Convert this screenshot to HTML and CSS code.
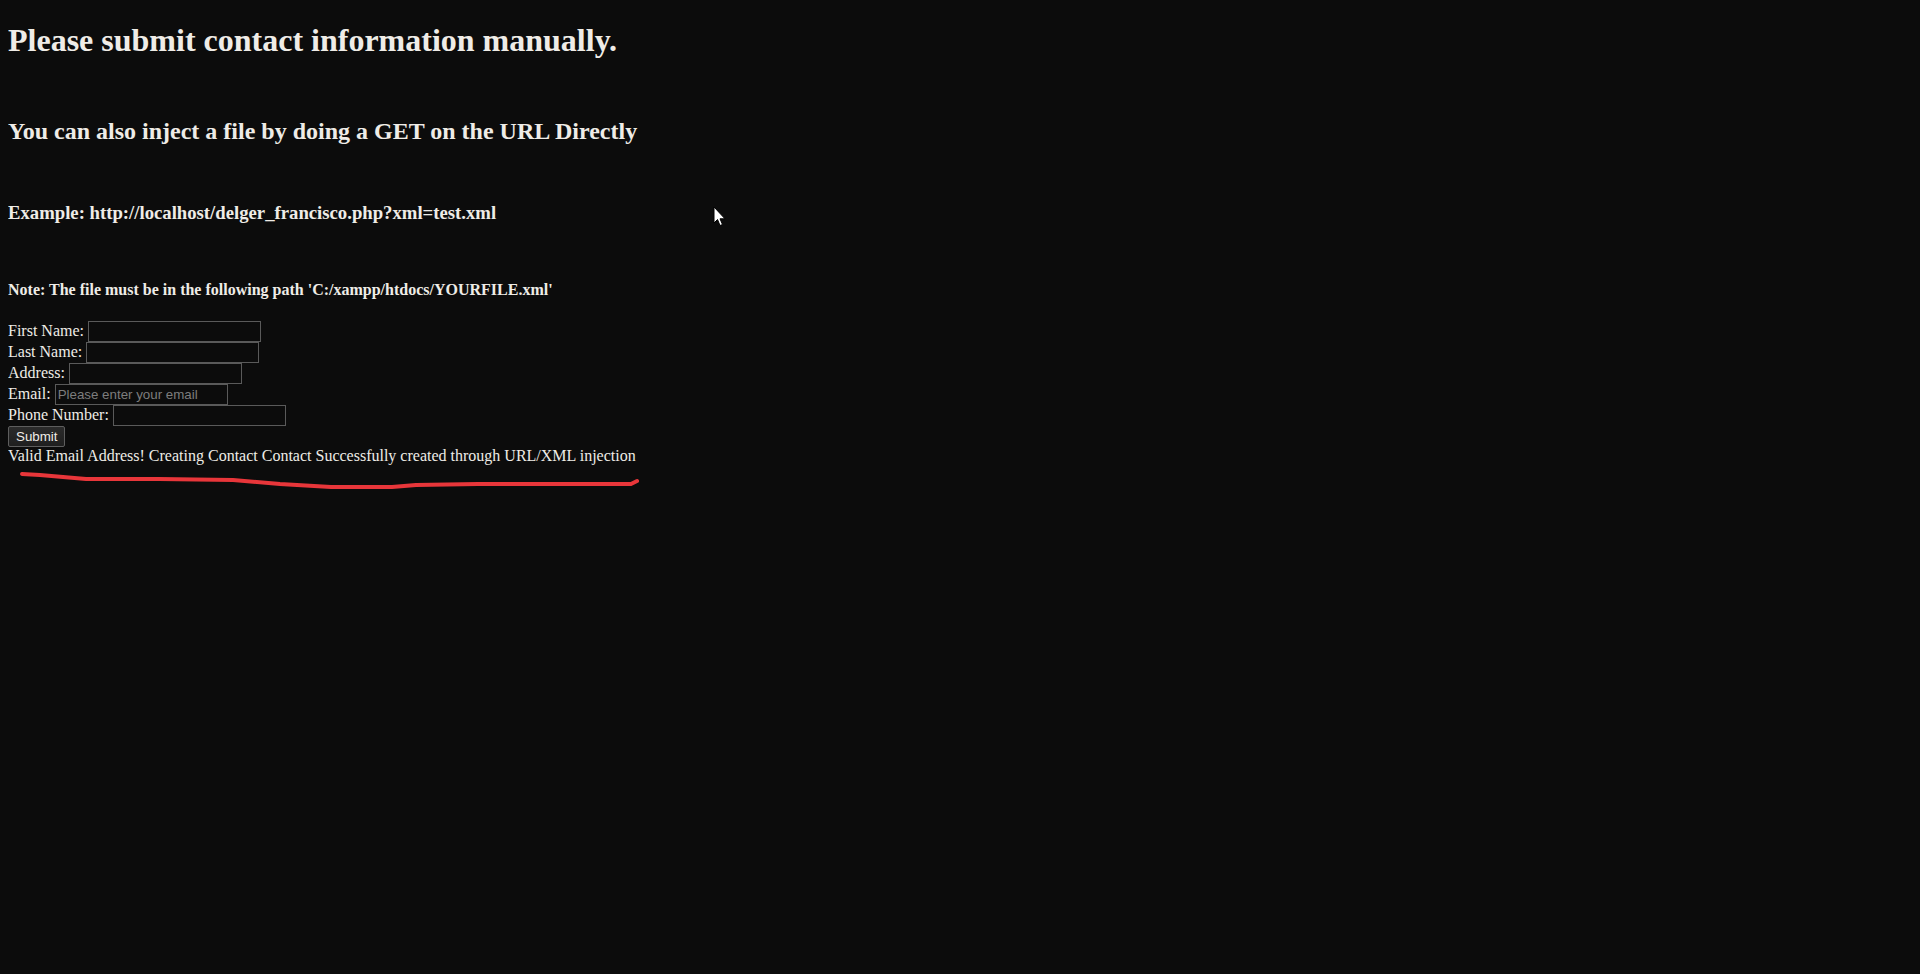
FILE: index.html
```html
<!DOCTYPE html>
<html>
<head>
<meta charset="utf-8">
<title>Contact</title>
<link rel="stylesheet" href="styles.css">
</head>
<body class="page">
<h1 class="title">Please submit contact information manually.</h1>
<br>
<h2 class="sub">You can also inject a file by doing a GET on the URL Directly</h2>
<br>
<h3 class="example">Example: http://localhost/delger_francisco.php?xml=test.xml</h3>
<br>
<h4 class="note">Note: The file must be in the following path 'C:/xampp/htdocs/YOURFILE.xml'</h4>
<form class="form">
First Name: <input class="field" type="text"><br>
Last Name: <input class="field" type="text"><br>
Address: <input class="field" type="text"><br>
Email: <input class="field" type="text" placeholder="Please enter your email"><br>
Phone Number: <input class="field" type="text"><br>
<button class="btn" type="button">Submit</button>
</form>
<div class="result">Valid Email Address! Creating Contact Contact Successfully created through URL/XML injection</div>
<svg class="scribble" width="660" height="500" viewBox="0 0 660 500">
<path d="M22 474 L40 475 L86 479 L159 479 L233 480 L280 484 L331 487 L392 487 L416 485 L478 484 L631 484 L637 481" fill="none" stroke="#e8363a" stroke-width="4" stroke-linecap="round" stroke-linejoin="round"/>
</svg>
<svg class="cursor" width="14" height="22" viewBox="0 0 14 22">
<path d="M1 1 L1 17 L4.5 13.5 L7 19.5 L9.5 18.5 L7 12.8 L12 12.8 Z" fill="#ffffff" stroke="#000000" stroke-width="1"/>
</svg>
</body>
</html>
```
FILE: styles.css
```css
html {
  background: #0c0c0c;
}
.page {
  margin: 0 8px 8px;
  padding-top: 0.1px;
  background: #0c0c0c;
  color: #efece7;
  font-family: "Liberation Serif", "Times New Roman", serif;
  font-size: 16px;
}
.title {
  font-size: 32px;
  margin: 21.44px 0;
}
.sub {
  font-size: 24px;
  margin: 19.92px 0;
}
.example {
  font-size: 18.72px;
  margin: 18.72px 0;
}
.note {
  font-size: 16px;
  margin: 21.28px 0;
}
.form {
  margin: 0;
}
.field {
  font-family: "Liberation Sans", Arial, sans-serif;
  font-size: 13.333px;
  background: #0c0c0c;
  color: #efece7;
  border: 1px solid #5a5a5a;
  padding: 1px 2px;
  margin: 0;
  box-sizing: border-box;
  height: 21px;
  width: 173px;
}
.field::placeholder {
  color: #7d7d7d;
}
.btn {
  font-family: "Liberation Sans", Arial, sans-serif;
  font-size: 13.333px;
  color: #efece7;
  background: linear-gradient(#2b2b2b, #1f1f1f);
  border: 1px solid #5e5e5e;
  border-radius: 2px;
  padding: 1px 7px;
  margin: 0;
  height: 21px;
  box-sizing: border-box;
  width: 57px;
}
.result {
  margin: 0;
}
.scribble {
  position: absolute;
  left: 0;
  top: 0;
  pointer-events: none;
}
.cursor {
  position: absolute;
  left: 713px;
  top: 206px;
}
```
